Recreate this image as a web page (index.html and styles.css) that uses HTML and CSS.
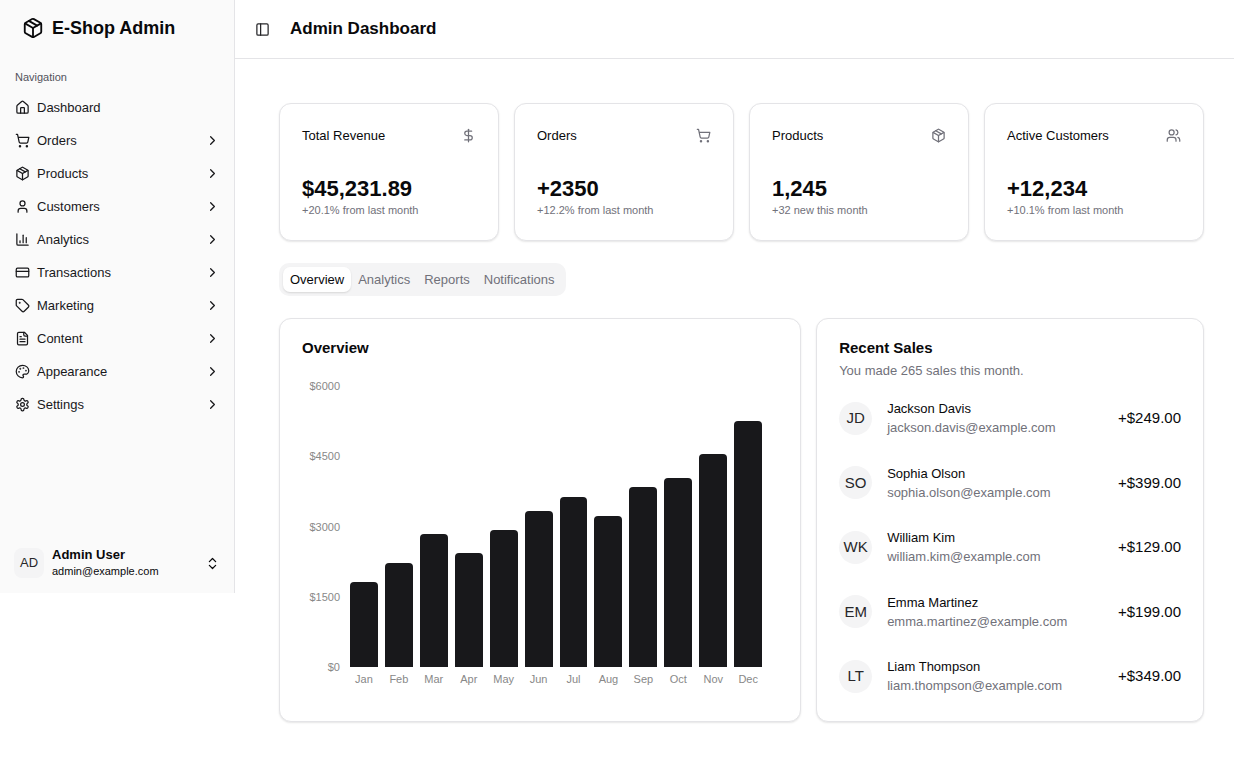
FILE: index.html
```html
<!DOCTYPE html>
<html lang="en">
<head>
<meta charset="utf-8">
<meta name="viewport" content="width=device-width, initial-scale=1">
<title>Admin Dashboard</title>
<link rel="stylesheet" href="styles.css">
</head>
<body>
<svg class="sprite" aria-hidden="true">
  <symbol id="package" viewBox="0 0 24 24"><path d="M11 21.73a2 2 0 0 0 2 0l7-4A2 2 0 0 0 21 16V8a2 2 0 0 0-1-1.73l-7-4a2 2 0 0 0-2 0l-7 4A2 2 0 0 0 3 8v8a2 2 0 0 0 1 1.73z"/><path d="M12 22V12"/><path d="m3.3 7 8.7 5 8.7-5"/><path d="m7.5 4.27 9 5.15"/></symbol>
  <symbol id="house" viewBox="0 0 24 24"><path d="M15 21v-8a1 1 0 0 0-1-1h-4a1 1 0 0 0-1 1v8"/><path d="M3 10a2 2 0 0 1 .709-1.528l7-5.999a2 2 0 0 1 2.582 0l7 5.999A2 2 0 0 1 21 10v9a2 2 0 0 1-2 2H5a2 2 0 0 1-2-2z"/></symbol>
  <symbol id="cart" viewBox="0 0 24 24"><circle cx="8" cy="21" r="1"/><circle cx="19" cy="21" r="1"/><path d="M2.05 2.05h2l2.66 12.42a2 2 0 0 0 2 1.58h9.78a2 2 0 0 0 1.95-1.57l1.65-7.43H5.12"/></symbol>
  <symbol id="user" viewBox="0 0 24 24"><path d="M19 21v-2a4 4 0 0 0-4-4H9a4 4 0 0 0-4 4v2"/><circle cx="12" cy="7" r="4"/></symbol>
  <symbol id="users" viewBox="0 0 24 24"><path d="M16 21v-2a4 4 0 0 0-4-4H6a4 4 0 0 0-4 4v2"/><circle cx="9" cy="7" r="4"/><path d="M22 21v-2a4 4 0 0 0-3-3.87"/><path d="M16 3.13a4 4 0 0 1 0 7.75"/></symbol>
  <symbol id="bars" viewBox="0 0 24 24"><path d="M3 3v16a2 2 0 0 0 2 2h16"/><path d="M18 17V9"/><path d="M13 17V5"/><path d="M8 17v-3"/></symbol>
  <symbol id="credit-card" viewBox="0 0 24 24"><rect width="20" height="14" x="2" y="5" rx="2"/><path d="M2 10h20"/></symbol>
  <symbol id="tag" viewBox="0 0 24 24"><path d="M12.586 2.586A2 2 0 0 0 11.172 2H4a2 2 0 0 0-2 2v7.172a2 2 0 0 0 .586 1.414l8.704 8.704a2.426 2.426 0 0 0 3.42 0l6.58-6.58a2.426 2.426 0 0 0 0-3.42z"/><circle cx="7.5" cy="7.5" r=".5" fill="currentColor"/></symbol>
  <symbol id="file-text" viewBox="0 0 24 24"><path d="M15 2H6a2 2 0 0 0-2 2v16a2 2 0 0 0 2 2h12a2 2 0 0 0 2-2V7Z"/><path d="M14 2v4a2 2 0 0 0 2 2h4"/><path d="M10 9H8"/><path d="M16 13H8"/><path d="M16 17H8"/></symbol>
  <symbol id="palette" viewBox="0 0 24 24"><circle cx="13.5" cy="6.5" r=".5" fill="currentColor"/><circle cx="17.5" cy="10.5" r=".5" fill="currentColor"/><circle cx="8.5" cy="7.5" r=".5" fill="currentColor"/><circle cx="6.5" cy="12.5" r=".5" fill="currentColor"/><path d="M12 2C6.5 2 2 6.5 2 12s4.5 10 10 10c.926 0 1.648-.746 1.648-1.688 0-.437-.18-.835-.437-1.125-.29-.289-.438-.652-.438-1.125a1.64 1.64 0 0 1 1.668-1.668h1.996c3.051 0 5.555-2.503 5.555-5.554C21.965 6.012 17.461 2 12 2z"/></symbol>
  <symbol id="settings" viewBox="0 0 24 24"><path d="M12.22 2h-.44a2 2 0 0 0-2 2v.18a2 2 0 0 1-1 1.73l-.43.25a2 2 0 0 1-2 0l-.15-.08a2 2 0 0 0-2.73.73l-.22.38a2 2 0 0 0 .73 2.73l.15.1a2 2 0 0 1 1 1.72v.51a2 2 0 0 1-1 1.74l-.15.09a2 2 0 0 0-.73 2.73l.22.38a2 2 0 0 0 2.73.73l.15-.08a2 2 0 0 1 2 0l.43.25a2 2 0 0 1 1 1.73V20a2 2 0 0 0 2 2h.44a2 2 0 0 0 2-2v-.18a2 2 0 0 1 1-1.73l.43-.25a2 2 0 0 1 2 0l.15.08a2 2 0 0 0 2.73-.73l.22-.39a2 2 0 0 0-.73-2.73l-.15-.08a2 2 0 0 1-1-1.74v-.5a2 2 0 0 1 1-1.74l.15-.09a2 2 0 0 0 .73-2.73l-.22-.38a2 2 0 0 0-2.73-.73l-.15.08a2 2 0 0 1-2 0l-.43-.25a2 2 0 0 1-1-1.73V4a2 2 0 0 0-2-2z"/><circle cx="12" cy="12" r="3"/></symbol>
  <symbol id="chevron" viewBox="0 0 24 24"><path d="m9 18 6-6-6-6"/></symbol>
  <symbol id="up-down" viewBox="0 0 24 24"><path d="m7 15 5 5 5-5"/><path d="m7 9 5-5 5 5"/></symbol>
  <symbol id="panel" viewBox="0 0 24 24"><rect width="18" height="18" x="3" y="3" rx="2"/><path d="M9 3v18"/></symbol>
  <symbol id="dollar" viewBox="0 0 24 24"><path d="M12 2v20"/><path d="M17 5H9.5a3.5 3.5 0 0 0 0 7h5a3.5 3.5 0 0 1 0 7H6"/></symbol>
</svg>
<div class="app">
  <aside class="sidebar">
    <a class="brand" href="#"><svg class="icon icon-lg"><use href="#package"/></svg><span>E-Shop Admin</span></a>
    <nav class="nav" aria-labelledby="nav-label">
      <div class="nav-label" id="nav-label">Navigation</div>
      <ul class="nav-list">
        <li><a class="nav-item" href="#"><svg class="icon"><use href="#house"/></svg><span>Dashboard</span></a></li>
        <li><button class="nav-item" type="button"><svg class="icon"><use href="#cart"/></svg><span>Orders</span><svg class="icon end"><use href="#chevron"/></svg></button></li>
        <li><button class="nav-item" type="button"><svg class="icon"><use href="#package"/></svg><span>Products</span><svg class="icon end"><use href="#chevron"/></svg></button></li>
        <li><button class="nav-item" type="button"><svg class="icon"><use href="#user"/></svg><span>Customers</span><svg class="icon end"><use href="#chevron"/></svg></button></li>
        <li><button class="nav-item" type="button"><svg class="icon"><use href="#bars"/></svg><span>Analytics</span><svg class="icon end"><use href="#chevron"/></svg></button></li>
        <li><button class="nav-item" type="button"><svg class="icon"><use href="#credit-card"/></svg><span>Transactions</span><svg class="icon end"><use href="#chevron"/></svg></button></li>
        <li><button class="nav-item" type="button"><svg class="icon"><use href="#tag"/></svg><span>Marketing</span><svg class="icon end"><use href="#chevron"/></svg></button></li>
        <li><button class="nav-item" type="button"><svg class="icon"><use href="#file-text"/></svg><span>Content</span><svg class="icon end"><use href="#chevron"/></svg></button></li>
        <li><button class="nav-item" type="button"><svg class="icon"><use href="#palette"/></svg><span>Appearance</span><svg class="icon end"><use href="#chevron"/></svg></button></li>
        <li><button class="nav-item" type="button"><svg class="icon"><use href="#settings"/></svg><span>Settings</span><svg class="icon end"><use href="#chevron"/></svg></button></li>
      </ul>
    </nav>
    <button class="account" type="button">
      <span class="account-avatar">AD</span>
      <span class="account-text"><strong>Admin User</strong><span>admin@example.com</span></span>
      <svg class="icon end"><use href="#up-down"/></svg>
    </button>
  </aside>
  <div class="page">
    <header class="topbar">
      <button class="toggle" type="button" aria-label="Toggle sidebar"><svg class="icon"><use href="#panel"/></svg></button>
      <h1>Admin Dashboard</h1>
    </header>
    <main class="content">
      <section class="stats" aria-label="Key figures">
        <article class="card stat">
          <div class="stat-head"><h2>Total Revenue</h2><svg class="icon"><use href="#dollar"/></svg></div>
          <div><p class="stat-value">$45,231.89</p><p class="stat-note">+20.1% from last month</p></div>
        </article>
        <article class="card stat">
          <div class="stat-head"><h2>Orders</h2><svg class="icon"><use href="#cart"/></svg></div>
          <div><p class="stat-value">+2350</p><p class="stat-note">+12.2% from last month</p></div>
        </article>
        <article class="card stat">
          <div class="stat-head"><h2>Products</h2><svg class="icon"><use href="#package"/></svg></div>
          <div><p class="stat-value">1,245</p><p class="stat-note">+32 new this month</p></div>
        </article>
        <article class="card stat">
          <div class="stat-head"><h2>Active Customers</h2><svg class="icon"><use href="#users"/></svg></div>
          <div><p class="stat-value">+12,234</p><p class="stat-note">+10.1% from last month</p></div>
        </article>
      </section>
      <div class="tabs" role="tablist">
        <button class="tab tab-active" type="button" role="tab" aria-selected="true">Overview</button>
        <button class="tab" type="button" role="tab" aria-selected="false">Analytics</button>
        <button class="tab" type="button" role="tab" aria-selected="false">Reports</button>
        <button class="tab" type="button" role="tab" aria-selected="false">Notifications</button>
      </div>
      <div class="panels">
        <section class="card overview">
          <h2 class="card-title">Overview</h2>
          <div class="chart">
            <div class="axis-y"><span>$6000</span><span>$4500</span><span>$3000</span><span>$1500</span><span>$0</span></div>
            <div class="plot">
              <div class="bar" style="height:30%"></div>
              <div class="bar" style="height:36.67%"></div>
              <div class="bar" style="height:46.67%"></div>
              <div class="bar" style="height:40%"></div>
              <div class="bar" style="height:48.33%"></div>
              <div class="bar" style="height:55%"></div>
              <div class="bar" style="height:60%"></div>
              <div class="bar" style="height:53.33%"></div>
              <div class="bar" style="height:63.33%"></div>
              <div class="bar" style="height:66.67%"></div>
              <div class="bar" style="height:75%"></div>
              <div class="bar" style="height:86.67%"></div>
            </div>
            <div class="axis-x"><span>Jan</span><span>Feb</span><span>Mar</span><span>Apr</span><span>May</span><span>Jun</span><span>Jul</span><span>Aug</span><span>Sep</span><span>Oct</span><span>Nov</span><span>Dec</span></div>
          </div>
        </section>
        <section class="card sales">
          <h2 class="card-title">Recent Sales</h2>
          <p class="card-note">You made 265 sales this month.</p>
          <ul class="sales-list">
            <li class="sale"><span class="avatar">JD</span><div><p>Jackson Davis</p><p class="email">jackson.davis@example.com</p></div><span class="amount">+$249.00</span></li>
            <li class="sale"><span class="avatar">SO</span><div><p>Sophia Olson</p><p class="email">sophia.olson@example.com</p></div><span class="amount">+$399.00</span></li>
            <li class="sale"><span class="avatar">WK</span><div><p>William Kim</p><p class="email">william.kim@example.com</p></div><span class="amount">+$129.00</span></li>
            <li class="sale"><span class="avatar">EM</span><div><p>Emma Martinez</p><p class="email">emma.martinez@example.com</p></div><span class="amount">+$199.00</span></li>
            <li class="sale"><span class="avatar">LT</span><div><p>Liam Thompson</p><p class="email">liam.thompson@example.com</p></div><span class="amount">+$349.00</span></li>
          </ul>
        </section>
      </div>
    </main>
  </div>
</div>
</body>
</html>
```
FILE: styles.css
```css
:root {
  --ink: #09090b;
  --muted: #71717a;
  --line: #e4e4e7;
  --soft: #f4f4f5;
}

* { box-sizing: border-box; }

body {
  margin: 0;
  background: #fff;
  color: var(--ink);
  font-family: "Liberation Sans", Arial, sans-serif;
  font-size: 13px;
  line-height: 18px;
}

h1, h2, p, ul { margin: 0; padding: 0; }
ul { list-style: none; }
a { color: inherit; text-decoration: none; }
button { border: 0; padding: 0; background: none; color: inherit; font: inherit; text-align: left; cursor: pointer; }

.sprite { display: none; }

.icon {
  width: 15px;
  height: 15px;
  flex: none;
  fill: none;
  stroke: currentColor;
  stroke-width: 2;
  stroke-linecap: round;
  stroke-linejoin: round;
}
.icon-lg { width: 22px; height: 22px; }
.end { margin-left: auto; }

.app { display: flex; align-items: flex-start; }

.sidebar {
  display: flex;
  flex-direction: column;
  flex: none;
  width: 235px;
  min-height: 593px;
  padding-bottom: 14px;
  border-right: 1px solid var(--line);
  background: #fafafa;
}

.brand {
  display: flex;
  align-items: center;
  gap: 8px;
  padding: 17px 22px;
  font-size: 18px;
  font-weight: 700;
  line-height: 22px;
}

.nav { padding: 7px; }
.nav-label { padding: 5px 8px 7px; color: #52525b; font-size: 11px; }
.nav-list { display: grid; gap: 4px; }
.nav-item {
  display: flex;
  align-items: center;
  gap: 7px;
  width: 100%;
  height: 29px;
  padding: 0 7px 0 8px;
  color: #18181b;
}

.account {
  display: flex;
  align-items: center;
  gap: 8px;
  margin-top: auto;
  padding: 0 14px;
}
.account-avatar {
  display: grid;
  place-items: center;
  width: 30px;
  height: 30px;
  border-radius: 8px;
  background: var(--soft);
  color: #27272a;
}
.account-text { display: grid; line-height: 16px; }
.account-text span { font-size: 11px; }

.page { flex: 1; min-width: 0; }

.topbar {
  display: flex;
  align-items: center;
  gap: 20px;
  height: 59px;
  padding: 0 20px;
  border-bottom: 1px solid var(--line);
}
.topbar h1 { font-size: 17px; line-height: 22px; }
.toggle { display: flex; color: #27272a; }

.content {
  display: grid;
  gap: 22px;
  padding: 44px 30px 44px 44px;
}

.card {
  padding: 22px;
  border: 1px solid var(--line);
  border-radius: 12px;
  background: #fff;
  box-shadow: 0 1px 2px rgb(0 0 0 / 10%);
}

.stats { display: grid; grid-template-columns: repeat(4, 1fr); gap: 15px; }
.stat { display: grid; gap: 29px; }
.stat-head { display: flex; align-items: center; justify-content: space-between; }
.stat-head h2 { font-size: 13px; font-weight: 400; line-height: 19px; }
.stat-head .icon { color: var(--muted); }
.stat-value { font-size: 22px; font-weight: 700; line-height: 30px; }
.stat-note { padding-bottom: 2px; color: var(--muted); font-size: 11px; line-height: 12px; }

.tabs {
  display: flex;
  justify-self: start;
  padding: 4px;
  border-radius: 10px;
  background: var(--soft);
}
.tab { height: 25px; padding: 0 7px; border-radius: 7px; color: var(--muted); }
.tab-active { background: #fff; color: var(--ink); box-shadow: 0 1px 2px rgb(0 0 0 / 12%); }

.panels { display: grid; grid-template-columns: repeat(7, 1fr); gap: 15px; }
.overview { grid-column: span 4; }
.sales { grid-column: span 3; display: flex; flex-direction: column; }
.card-title { font-size: 15px; line-height: 14px; }
.card-note { margin-top: 7px; color: var(--muted); }

.chart {
  display: grid;
  grid-template-columns: 38px 1fr;
  grid-template-rows: 284px 24px;
  column-gap: 10px;
  padding: 28px 16px 8px 0;
  color: #888;
  font-size: 11px;
}
.axis-y {
  display: flex;
  flex-direction: column;
  justify-content: space-between;
  margin: -6px 0 -9px;
  text-align: right;
}
.plot, .axis-x { display: grid; grid-template-columns: repeat(12, 1fr); column-gap: 7px; }
.plot { align-items: end; }
.bar { border-radius: 4px 4px 0 0; background: #18181b; }
.axis-x { grid-column: 2; padding-top: 3px; justify-items: center; }

.sales-list {
  display: flex;
  flex: 1;
  flex-direction: column;
  justify-content: space-between;
  padding: 19px 0 4px;
}
.sale { display: flex; align-items: center; gap: 15px; }
.sale p { line-height: 19px; }
.sale .email { color: var(--muted); }
.avatar {
  display: grid;
  place-items: center;
  width: 33px;
  height: 33px;
  border-radius: 50%;
  background: var(--soft);
  color: #27272a;
  font-size: 15px;
}
.amount { margin-left: auto; font-size: 15px; }
```
